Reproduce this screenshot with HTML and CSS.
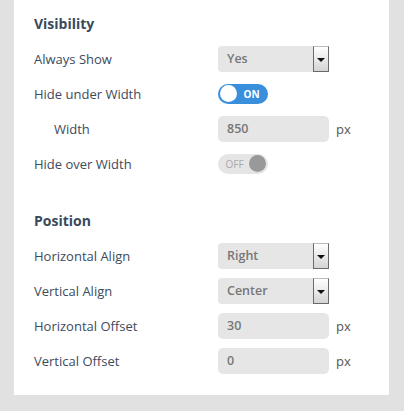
FILE: index.html
```html
<!DOCTYPE html>
<html>
<head>
<meta charset="utf-8">
<link rel="stylesheet" href="styles.css">
</head>
<body>
<div class="panel">
  <h3 class="heading">Visibility</h3>
  <div class="row">
    <span class="label">Always Show</span>
    <div class="select"><span class="value">Yes</span><span class="arrow"></span></div>
  </div>
  <div class="row">
    <span class="label">Hide under Width</span>
    <div class="toggle on"><span class="knob"></span><span class="ttext">ON</span></div>
  </div>
  <div class="row">
    <span class="label indent">Width</span>
    <div class="field"><div class="input">850</div><span class="unit">px</span></div>
  </div>
  <div class="row">
    <span class="label">Hide over Width</span>
    <div class="toggle off"><span class="ttext">OFF</span><span class="knob"></span></div>
  </div>

  <h3 class="heading second">Position</h3>
  <div class="row">
    <span class="label">Horizontal Align</span>
    <div class="select"><span class="value">Right</span><span class="arrow"></span></div>
  </div>
  <div class="row">
    <span class="label">Vertical Align</span>
    <div class="select"><span class="value">Center</span><span class="arrow"></span></div>
  </div>
  <div class="row">
    <span class="label">Horizontal Offset</span>
    <div class="field"><div class="input">30</div><span class="unit">px</span></div>
  </div>
  <div class="row">
    <span class="label">Vertical Offset</span>
    <div class="field"><div class="input">0</div><span class="unit">px</span></div>
  </div>
</div>
</body>
</html>
```

FILE: styles.css
```css
html, body {
  margin: 0;
  padding: 0;
}
body {
  background: #e1e1e1;
  font-family: "Open Sans", "Liberation Sans", sans-serif;
  color: #3d4a5c;
  width: 404px;
  height: 411px;
  overflow: hidden;
}
.panel {
  margin-left: 14px;
  width: 355px;
  background: #fff;
  padding: 6px 0 17px 20px;
}
.heading {
  margin: 0;
  height: 35px;
  line-height: 35px;
  font-size: 14px;
  font-weight: 700;
  color: #3a4a5e;
}
.heading.second {
  margin-top: 22px;
}
.row {
  display: grid;
  grid-template-columns: 184px 1fr;
  align-items: center;
  height: 35px;
}
.label {
  font-size: 13px;
}
.label.indent {
  padding-left: 20px;
}
.select {
  width: 111px;
  height: 26px;
  background: #e6e6e6;
  border-radius: 4px 0 0 4px;
  display: flex;
  align-items: center;
  justify-content: space-between;
  box-sizing: border-box;
}
.value, .input {
  font-size: 12.5px;
  font-weight: 600;
  color: #777;
  padding-left: 9px;
}
.arrow {
  width: 16px;
  height: 26px;
  box-sizing: border-box;
  border: 1px solid #6a6a6a;
  border-top-color: #bbb;
  background: linear-gradient(#ffffff, #d4d4d4);
  position: relative;
}
.arrow::after {
  content: "";
  position: absolute;
  left: 3px;
  top: 11px;
  border-left: 4px solid transparent;
  border-right: 4px solid transparent;
  border-top: 4px solid #111;
}
.field {
  display: flex;
  align-items: center;
}
.input {
  width: 111px;
  height: 26px;
  line-height: 26px;
  background: #e6e6e6;
  border-radius: 5px;
  box-sizing: border-box;
}
.unit {
  margin-left: 7px;
  font-size: 13px;
  color: #555;
}
.toggle {
  width: 50px;
  height: 20px;
  border-radius: 10px;
  display: flex;
  align-items: center;
  box-sizing: border-box;
  padding: 0 2px;
}
.toggle .ttext {
  font-size: 10px;
  font-weight: 700;
  flex: 1;
  text-align: center;
}
.toggle.on {
  background: #3a8fdd;
  color: #fff;
}
.toggle.on .knob {
  width: 17px;
  height: 17px;
  border-radius: 50%;
  background: #fff;
}
.toggle.off {
  background: #e5e5e5;
  color: #aaa;
}
.toggle.off .ttext {
  font-weight: 400;
}
.toggle.off .knob {
  width: 17px;
  height: 17px;
  border-radius: 50%;
  background: #999;
}
```
